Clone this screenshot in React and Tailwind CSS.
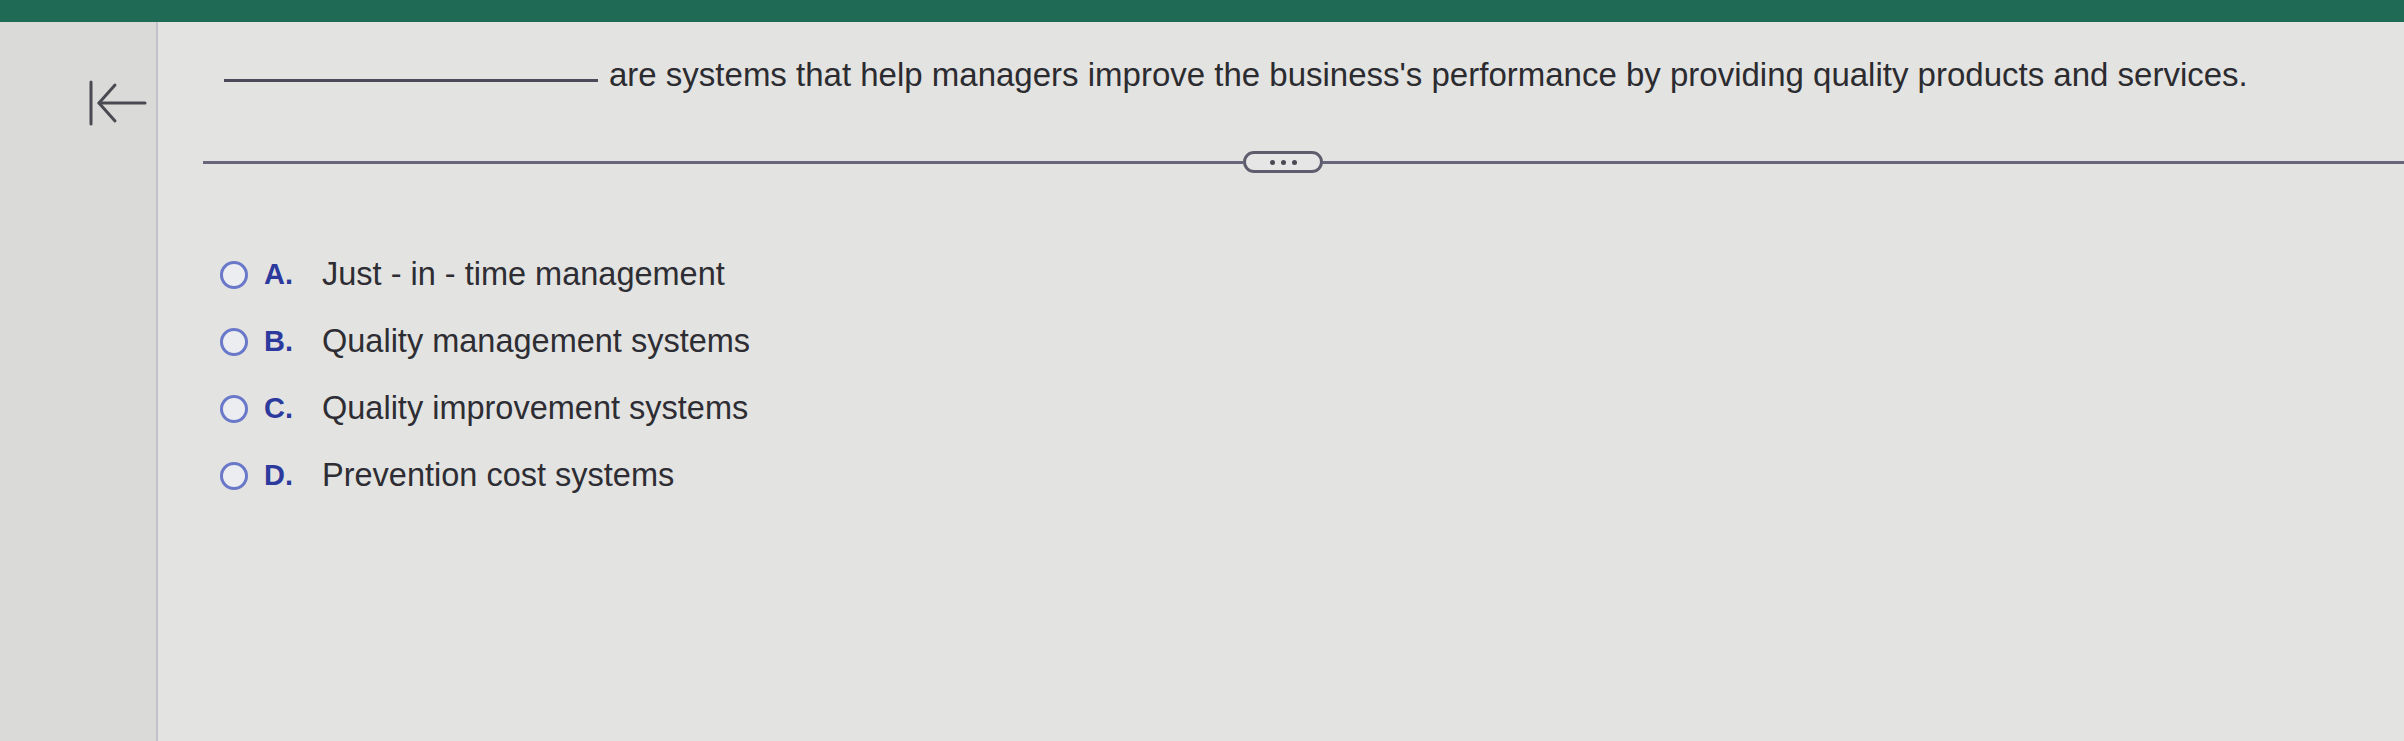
export default function App() {
  const options = [
    { letter: "A.", text: "Just - in - time management" },
    { letter: "B.", text: "Quality management systems" },
    { letter: "C.", text: "Quality improvement systems" },
    { letter: "D.", text: "Prevention cost systems" },
  ];

  return (
    <div className="w-[2404px] h-[741px] flex flex-col bg-[#e3e3e1] overflow-hidden" style={{ fontFamily: '"Liberation Sans", Arial, sans-serif' }}>
      <div className="h-[22px] bg-[#1f6a55] shrink-0" />
      <div className="flex flex-1 min-h-0">
        <aside className="w-[158px] shrink-0 bg-[#dadad8] border-r-2 border-[#c2c3ca] pl-[88px] pt-[58px]">
          <svg width="60" height="46" viewBox="0 0 60 46" fill="none" stroke="#4a4a52" strokeWidth="3" strokeLinecap="round" strokeLinejoin="round">
            <line x1="3" y1="2" x2="3" y2="44" />
            <polyline points="27,5 11,23 27,41" />
            <line x1="11" y1="23" x2="57" y2="23" />
          </svg>
        </aside>
        <main className="flex-1 flex flex-col">
          <div className="flex items-end pl-[66px] pt-[34px] text-[33px] leading-[38px] text-[#2b2b30]">
            <span className="w-[374px] shrink-0 border-b-[3px] border-[#4c4b5c] mb-[12px] mr-[11px]" />
            <span className="whitespace-nowrap">are systems that help managers improve the business's performance by providing quality products and services.</span>
          </div>
          <div className="flex items-center ml-[45px] mt-[57px]">
            <div className="w-[1040px] h-[3px] bg-[#67667a]" />
            <div className="w-[80px] h-[22px] shrink-0 rounded-full border-[3px] border-[#5e5d6e] flex items-center justify-center gap-[6px] bg-[#e6e6e6]">
              <span className="w-[5px] h-[5px] rounded-full bg-[#4a4a55]" />
              <span className="w-[5px] h-[5px] rounded-full bg-[#4a4a55]" />
              <span className="w-[5px] h-[5px] rounded-full bg-[#4a4a55]" />
            </div>
            <div className="flex-1 h-[3px] bg-[#67667a]" />
          </div>
          <div className="flex flex-col gap-[32px] pl-[62px] mt-[84px]">
            {options.map((o) => (
              <div key={o.letter} className="flex items-center h-[35px]">
                <span className="w-[28px] h-[28px] rounded-full border-[3px] border-[#6a78c9] bg-[#ecedf0] shrink-0" />
                <span className="ml-[16px] w-[58px] text-[29px] font-bold text-[#2c3a9e]">{o.letter}</span>
                <span className="text-[32.5px] text-[#2d2d33] whitespace-nowrap">{o.text}</span>
              </div>
            ))}
          </div>
        </main>
      </div>
    </div>
  );
}
